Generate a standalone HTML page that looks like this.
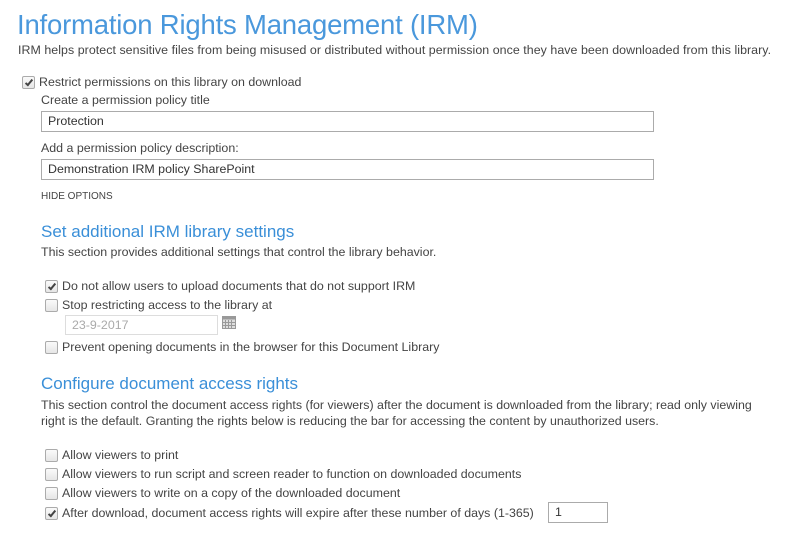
<!DOCTYPE html>
<html><head><meta charset="utf-8"><style>
body{margin:0;width:809px;height:541px;background:#fff;position:relative;overflow:hidden;font-family:"Liberation Sans",sans-serif;color:#444;font-size:12.4px}
.a{position:absolute;white-space:nowrap;line-height:14px}
.h1{position:absolute;left:17px;top:7px;font-size:27.5px;color:#4a98dc;white-space:nowrap;letter-spacing:-0.2px;line-height:36px}
.h2{position:absolute;left:41px;font-size:17px;color:#3a8fd8;white-space:nowrap;line-height:22px}
.cb{position:absolute;width:11px;height:11px;border:1px solid #ababab;border-radius:2px;background:linear-gradient(#fafafa,#e6e6e6)}
.cb.c::after{content:"";position:absolute;left:4px;top:1px;width:2px;height:6px;border:solid #444;border-width:0 2px 2px 0;transform:rotate(40deg)}
.in{position:absolute;border:1px solid #ababab;background:#fff;box-sizing:border-box;padding-left:6px;line-height:19px;font-size:12.4px;color:#333}
</style></head><body>
<div class="h1">Information Rights Management (IRM)</div>
<div class="a" style="left:18px;top:43px;font-size:12.4px;letter-spacing:0.05px">IRM helps protect sensitive files from being misused or distributed without permission once they have been downloaded from this library.</div>
<div class="cb c" style="left:22px;top:76px"></div>
<div class="a" style="left:39px;top:75px">Restrict permissions on this library on download</div>
<div class="a" style="left:41px;top:93px">Create a permission policy title</div>
<div class="in" style="left:41px;top:111px;width:613px;height:21px">Protection</div>
<div class="a" style="left:41px;top:141px">Add a permission policy description:</div>
<div class="in" style="left:41px;top:159px;width:613px;height:21px">Demonstration IRM policy SharePoint</div>
<div class="a" style="left:41px;top:190px;font-size:10px">HIDE OPTIONS</div>
<div class="h2" style="top:221px">Set additional IRM library settings</div>
<div class="a" style="left:41px;top:245px">This section provides additional settings that control the library behavior.</div>
<div class="cb c" style="left:45px;top:280px"></div>
<div class="a" style="left:62px;top:279px">Do not allow users to upload documents that do not support IRM</div>
<div class="cb" style="left:45px;top:299px"></div>
<div class="a" style="left:62px;top:298px">Stop restricting access to the library at</div>
<div class="in" style="left:65px;top:315px;width:153px;height:20px;border-color:#ddd;color:#aaa">23-9-2017</div>
<svg style="position:absolute;left:222px;top:316px" width="14" height="13"><rect x="0.5" y="0.5" width="13" height="12" fill="#ddd" stroke="#999"/><rect x="0.5" y="0.5" width="13" height="3" fill="#999"/><path d="M3.5 4v9M6.5 4v9M9.5 4v9M1 6.5h12M1 9.5h12" stroke="#999"/></svg>
<div class="cb" style="left:45px;top:341px"></div>
<div class="a" style="left:62px;top:340px">Prevent opening documents in the browser for this Document Library</div>
<div class="h2" style="top:373px">Configure document access rights</div>
<div class="a" style="left:41px;top:398px">This section control the document access rights (for viewers) after the document is downloaded from the library; read only viewing</div>
<div class="a" style="left:41px;top:414px">right is the default. Granting the rights below is reducing the bar for accessing the content by unauthorized users.</div>
<div class="cb" style="left:45px;top:449px"></div>
<div class="a" style="left:62px;top:448px">Allow viewers to print</div>
<div class="cb" style="left:45px;top:468px"></div>
<div class="a" style="left:62px;top:467px">Allow viewers to run script and screen reader to function on downloaded documents</div>
<div class="cb" style="left:45px;top:487px"></div>
<div class="a" style="left:62px;top:486px">Allow viewers to write on a copy of the downloaded document</div>
<div class="cb c" style="left:45px;top:507px"></div>
<div class="a" style="left:62px;top:506px">After download, document access rights will expire after these number of days (1-365)</div>
<div class="in" style="left:548px;top:502px;width:60px;height:21px">1</div>
</body></html>
